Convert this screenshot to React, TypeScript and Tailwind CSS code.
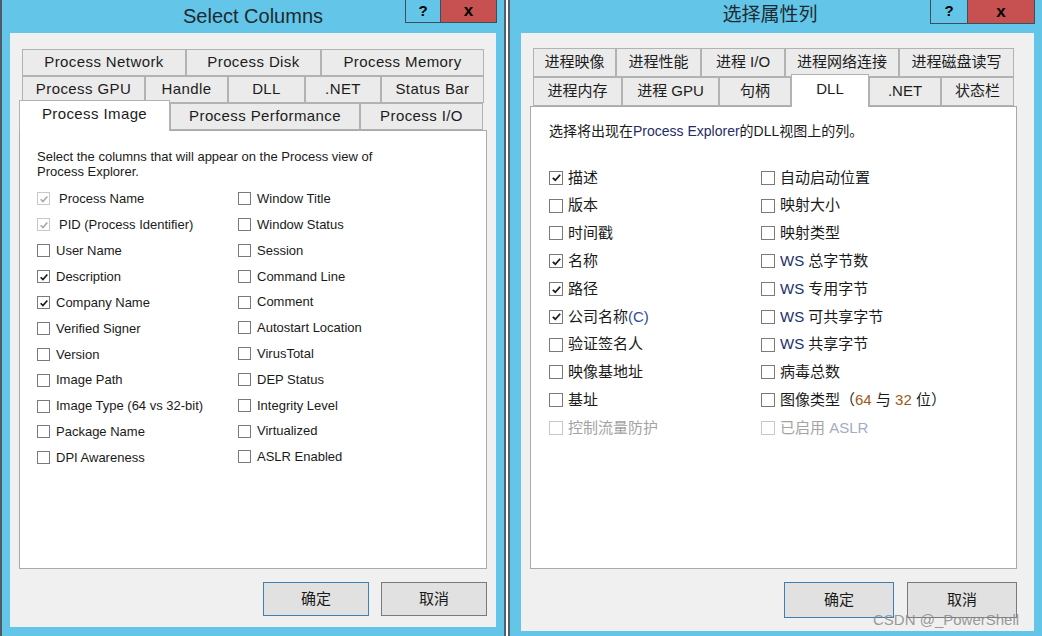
import React from 'react';

type Item = { label: React.ReactNode; checked?: boolean; disabled?: boolean; greyText?: boolean };

const sans = "font-['Liberation_Sans',Arial,sans-serif]";
const cjk = "font-['Liberation_Sans','Noto_Sans_CJK_SC',sans-serif]";

function Check({ checked, disabled, big }: { checked?: boolean; disabled?: boolean; big?: boolean }) {
  return (
    <span
      className={`flex shrink-0 items-center justify-center border bg-white ${big ? 'h-[14px] w-[14px]' : 'h-[13px] w-[13px]'} ${
        disabled ? 'border-[#c8c8c8]' : 'border-[#7a7a7a]'
      }`}
    >
      {checked && (
        <svg viewBox="0 0 12 12" className={big ? 'h-[11px] w-[11px]' : 'h-[10px] w-[10px]'}>
          <path d="M2 6.3 L4.7 9 L10 3" fill="none" stroke={disabled ? '#a9a9a9' : '#1c1c1c'} strokeWidth="2" />
        </svg>
      )}
    </span>
  );
}

function Tab({ className, active, children }: { className: string; active?: boolean; children: React.ReactNode }) {
  return (
    <div
      className={`flex shrink-0 items-center justify-center border-[#b2b2b2] text-[#1c1c1c] ${
        active ? 'relative z-10 border-x border-t bg-white pb-[3px]' : 'border bg-[#ebebeb]'
      } ${className}`}
    >
      {children}
    </div>
  );
}

function TitleBar({ title, titleClass, helpClass, closeClass }: { title: string; titleClass: string; helpClass: string; closeClass: string }) {
  return (
    <div className="relative flex h-[33px] shrink-0 items-center justify-center">
      <span className={titleClass}>{title}</span>
      <div className="absolute right-[7px] top-0 flex border-x border-b border-[#3e4f5c]">
        <div className={`flex items-center justify-center border-r border-[#3e4f5c] text-[15px] font-bold text-black ${sans} ${helpClass}`}>?</div>
        <div className={`flex items-center justify-center bg-[#c75050] text-[17px] font-bold text-black ${sans} ${closeClass}`}>x</div>
      </div>
    </div>
  );
}

const leftA: Item[] = [
  { label: 'Process Name', checked: true, disabled: true },
  { label: 'PID (Process Identifier)', checked: true, disabled: true },
  { label: 'User Name' },
  { label: 'Description', checked: true },
  { label: 'Company Name', checked: true },
  { label: 'Verified Signer' },
  { label: 'Version' },
  { label: 'Image Path' },
  { label: 'Image Type (64 vs 32-bit)' },
  { label: 'Package Name' },
  { label: 'DPI Awareness' },
];

const leftB: Item[] = [
  { label: 'Window Title' },
  { label: 'Window Status' },
  { label: 'Session' },
  { label: 'Command Line' },
  { label: 'Comment' },
  { label: 'Autostart Location' },
  { label: 'VirusTotal' },
  { label: 'DEP Status' },
  { label: 'Integrity Level' },
  { label: 'Virtualized' },
  { label: 'ASLR Enabled' },
];

const navy = 'text-[#22306a]';

const rightA: Item[] = [
  { label: '描述', checked: true },
  { label: '版本' },
  { label: '时间戳' },
  { label: '名称', checked: true },
  { label: '路径', checked: true },
  { label: <>公司名称<span className="text-[#2f4a9a]">(C)</span></>, checked: true },
  { label: '验证签名人' },
  { label: '映像基地址' },
  { label: '基址' },
  { label: '控制流量防护', disabled: true, greyText: true },
];

const rightB: Item[] = [
  { label: '自动启动位置' },
  { label: '映射大小' },
  { label: '映射类型' },
  { label: <><span className={navy}>WS</span> 总字节数</> },
  { label: <><span className={navy}>WS</span> 专用字节</> },
  { label: <><span className={navy}>WS</span> 可共享字节</> },
  { label: <><span className={navy}>WS</span> 共享字节</> },
  { label: '病毒总数' },
  { label: <>图像类型（<span className="text-[#9a5a16]">64</span> 与 <span className="text-[#9a5a16]">32</span> 位）</> },
  { label: <>已启用 <span className="text-[#a4acc4]">ASLR</span></>, disabled: true, greyText: true },
];

function LeftWindow() {
  return (
    <div className="flex h-[636px] w-[504px] shrink-0 flex-col border-l-2 border-[#4f5b66] bg-[#63c6e9]">
      <TitleBar
        title="Select Columns"
        titleClass={`pb-[2px] text-[20px] text-[#1e2a30] ${sans}`}
        helpClass="h-[22px] w-[35px]"
        closeClass="h-[22px] w-[55px]"
      />
      <div className={`ml-[8px] flex h-[594px] w-[486px] flex-col bg-[#f0f0f0] ${sans}`}>
        <div className="flex flex-col pl-[12px] pt-[16px] text-[15px] tracking-[0.4px]">
          <div className="flex h-[27px]">
            <Tab className="w-[164px]">Process Network</Tab>
            <Tab className="w-[135px]">Process Disk</Tab>
            <Tab className="w-[163px]">Process Memory</Tab>
          </div>
          <div className="flex h-[27px]">
            <Tab className="w-[123px]">Process GPU</Tab>
            <Tab className="w-[83px]">Handle</Tab>
            <Tab className="w-[77px]">DLL</Tab>
            <Tab className="w-[76px]">.NET</Tab>
            <Tab className="w-[103px]">Status Bar</Tab>
          </div>
          <div className="flex h-[27px] items-start">
            <Tab active className="-mb-px -ml-[3px] -mt-[3px] h-[31px] w-[151px]">Process Image</Tab>
            <Tab className="h-[27px] w-[190px]">Process Performance</Tab>
            <Tab className="h-[27px] w-[123px]">Process I/O</Tab>
          </div>
        </div>
        <div className="ml-[9px] flex h-[439px] w-[468px] flex-col border border-[#a9a9a9] bg-white pl-[17px] pt-[18px] text-[13px] text-[#1a1a1a]">
          <p className="leading-[15px]">
            Select the columns that will appear on the Process view of
            <br />
            Process Explorer.
          </p>
          <div className="mt-[7px] flex">
            <div className="flex w-[201px] flex-col">
              {leftA.map((it, i) => (
                <div key={`la-${i}`} className="flex h-[25.9px] items-center">
                  <Check checked={it.checked} disabled={it.disabled} />
                  <span className={it.disabled ? 'ml-[9px]' : 'ml-[6px]'}>{it.label}</span>
                </div>
              ))}
            </div>
            <div className="flex flex-col">
              {leftB.map((it, i) => (
                <div key={`lb-${i}`} className="flex h-[25.8px] items-center">
                  <Check checked={it.checked} />
                  <span className="ml-[6px]">{it.label}</span>
                </div>
              ))}
            </div>
          </div>
        </div>
        <div className="mt-[13px] flex w-[477px] justify-end gap-[12px]">
          <button className={`flex h-[34px] w-[106px] items-center justify-center border border-[#3c7fb1] bg-[#e1e1e1] text-[15px] text-[#1a1a1a] ${cjk}`}>确定</button>
          <button className={`flex h-[34px] w-[106px] items-center justify-center border border-[#7a7a7a] bg-[#e1e1e1] text-[15px] text-[#1a1a1a] ${cjk}`}>取消</button>
        </div>
      </div>
    </div>
  );
}

function RightWindow() {
  return (
    <div className="flex h-[636px] flex-1 flex-col bg-[#63c6e9]">
      <TitleBar
        title="选择属性列"
        titleClass={`pb-[2px] pr-[12px] text-[19px] text-[#1e2a30] ${cjk}`}
        helpClass="h-[23px] w-[37px]"
        closeClass="h-[23px] w-[66px]"
      />
      <div className={`ml-[11px] flex h-[598px] w-[513px] flex-col bg-[#f0f0f0] ${cjk}`}>
        <div className="flex flex-col pl-[12px] pt-[15px] text-[15px]">
          <div className="flex h-[29px]">
            <Tab className="w-[83px]">进程映像</Tab>
            <Tab className="w-[85px]">进程性能</Tab>
            <Tab className="w-[84px]">进程 I/O</Tab>
            <Tab className="w-[114px]">进程网络连接</Tab>
            <Tab className="w-[115px]">进程磁盘读写</Tab>
          </div>
          <div className="flex h-[29px] items-start">
            <Tab className="h-[29px] w-[89px]">进程内存</Tab>
            <Tab className="h-[29px] w-[97px]">进程 GPU</Tab>
            <Tab className="h-[29px] w-[72px]">句柄</Tab>
            <Tab active className="-mb-px -mt-[3px] h-[33px] w-[78px]">DLL</Tab>
            <Tab className="h-[29px] w-[72px]">.NET</Tab>
            <Tab className="h-[29px] w-[73px]">状态栏</Tab>
          </div>
        </div>
        <div className="ml-[9px] flex h-[463px] w-[487px] flex-col border border-[#a9a9a9] bg-white pl-[18px] pt-[14px] text-[#1a1a1a]">
          <p className="text-[14px] leading-[20px]">
            选择将出现在<span className="text-[#1f2d66]">Process Explorer</span>的DLL视图上的列。
          </p>
          <div className="mt-[23px] flex text-[15px]">
            <div className="flex w-[212px] flex-col">
              {rightA.map((it, i) => (
                <div key={`ra-${i}`} className="flex h-[27.8px] items-center">
                  <Check big checked={it.checked} disabled={it.disabled} />
                  <span className={`ml-[5px] ${it.greyText ? 'text-[#a3a3a3]' : ''}`}>{it.label}</span>
                </div>
              ))}
            </div>
            <div className="flex flex-col">
              {rightB.map((it, i) => (
                <div key={`rb-${i}`} className="flex h-[27.8px] items-center">
                  <Check big checked={it.checked} disabled={it.disabled} />
                  <span className={`ml-[5px] ${it.greyText ? 'text-[#a3a3a3]' : ''}`}>{it.label}</span>
                </div>
              ))}
            </div>
          </div>
        </div>
        <div className="mt-[13px] flex w-[496px] justify-end gap-[13px]">
          <button className="flex h-[36px] w-[110px] items-center justify-center border border-[#3c7fb1] bg-[#e1e1e1] text-[15px] text-[#1a1a1a]">确定</button>
          <button className="flex h-[36px] w-[110px] items-center justify-center border border-[#7a7a7a] bg-[#e1e1e1] text-[15px] text-[#1a1a1a]">取消</button>
        </div>
      </div>
    </div>
  );
}

export default function App() {
  return (
    <div className="relative flex h-[636px] w-[1042px] overflow-hidden">
      <LeftWindow />
      <div className="h-[636px] w-[6px] shrink-0 border-x-2 border-[#55606b] bg-white" />
      <RightWindow />
      <span className={`absolute left-[873px] top-[609px] text-[15px] text-[#8d8d8d]/90 ${sans}`}>CSDN @_PowerShell</span>
    </div>
  );
}
